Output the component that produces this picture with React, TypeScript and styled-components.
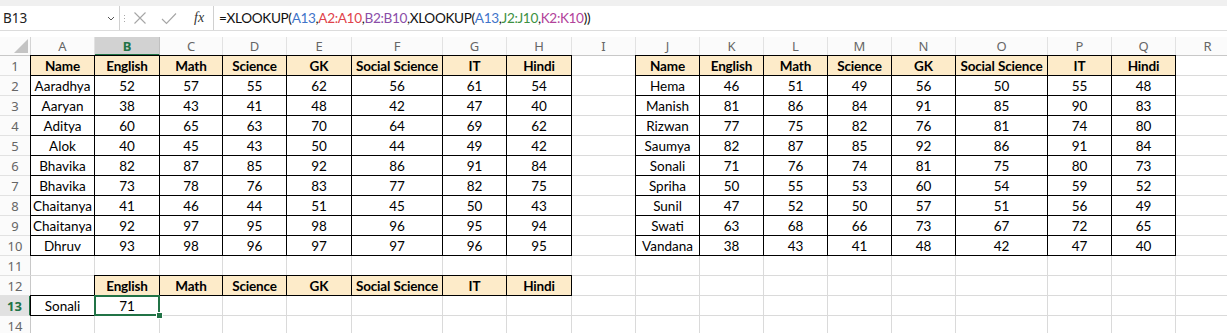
import React from "react";
import styled, { createGlobalStyle, css } from "styled-components";

const GlobalStyle = createGlobalStyle`
  html, body { margin: 0; padding: 0; background: #ffffff; overflow: hidden; }
  #root { width: 1227px; height: 333px; overflow: hidden; }
`;

const GREEN = "#217346";
const GRID = "#dadada";
const FILL = "#fdebc9";

const colWidths = [31, 64, 65, 63, 64, 65, 91, 64, 65, 64, 64, 64, 64, 64, 64, 92, 64, 64, 64];
const letters = "ABCDEFGHIJKLMNOPQR".split("");

const Page = styled.div`
  width: 1227px;
  height: 333px;
  overflow: hidden;
  background: #ffffff;
  font-family: Lato, "Liberation Sans", sans-serif;
`;

const TopStrip = styled.div`
  background: #f0f0f0;
  padding-top: 6px;
`;

const FormulaRow = styled.div`
  display: flex;
  height: 24px;
  background: #ffffff;
  border-bottom: 1px solid #dcdcdc;
`;

const NameBox = styled.div`
  width: 120px;
  box-sizing: border-box;
  display: flex;
  align-items: center;
  justify-content: space-between;
  padding: 0 4px 0 3px;
  font-family: "Noto Sans", "Open Sans", sans-serif;
  font-size: 13.5px;
  color: #222;
  border-right: 1px solid #d0d0d0;
`;

const Dots = styled.div`
  width: 8px;
  display: flex;
  flex-direction: column;
  align-items: center;
  justify-content: center;
  gap: 2px;
  span {
    width: 1px;
    height: 1px;
    background: #a8a8a8;
  }
`;

const FxArea = styled.div`
  width: 86px;
  box-sizing: border-box;
  display: flex;
  align-items: center;
  padding-left: 5px;
  gap: 14px;
  border-right: 1px solid #d0d0d0;
`;

const Fx = styled.span`
  font-family: "Liberation Serif", serif;
  font-style: italic;
  font-size: 14px;
  color: #333;
  margin-left: 3px;
`;

const FormulaText = styled.div`
  flex: 1;
  display: flex;
  align-items: center;
  padding-left: 5px;
  font-family: Lato, "Liberation Sans", sans-serif;
  font-size: 13.6px;
  letter-spacing: -0.35px;
  color: #111;
  white-space: pre;
`;

const Ref = styled.span<{ $c: string }>`
  color: ${(p) => p.$c};
`;

const Gap = styled.div`
  height: 6px;
  background: #ffffff;
`;

const Sheet = styled.div`
  display: grid;
  grid-template-columns: ${colWidths.map((w) => `${w}px`).join(" ")};
  grid-template-rows: 19px repeat(14, 20px);
`;

const Corner = styled.div`
  box-sizing: border-box;
  background: #fbfbfb;
  border-right: 1px solid #d4d4d4;
  border-bottom: 1px solid #c8c8c8;
  display: flex;
  align-items: flex-end;
  justify-content: flex-end;
  padding: 0 2px 2px 0;
`;

const ColHeader = styled.div<{ $sel?: boolean }>`
  box-sizing: border-box;
  display: flex;
  align-items: center;
  justify-content: center;
  font-family: "Noto Sans", "Open Sans", sans-serif;
  font-size: 13px;
  color: #666;
  background: #fbfbfb;
  border-right: 1px solid #e2e2e2;
  border-bottom: 1px solid #c8c8c8;
  ${(p) =>
    p.$sel &&
    css`
      background: #d2d2d2;
      color: ${GREEN};
      font-weight: 700;
      border-bottom: 2px solid ${GREEN};
      border-right-color: #c0c0c0;
    `}
`;

const RowHeader = styled.div<{ $sel?: boolean }>`
  box-sizing: border-box;
  display: flex;
  align-items: center;
  justify-content: center;
  font-family: "Noto Sans", "Open Sans", sans-serif;
  font-size: 13px;
  color: #666;
  background: #fbfbfb;
  border-right: 1px solid #c8c8c8;
  border-bottom: 1px solid #e2e2e2;
  ${(p) =>
    p.$sel &&
    css`
      background: #e1e1e1;
      color: ${GREEN};
      font-weight: 700;
      border-right: 2px solid ${GREEN};
    `}
`;

const Cell = styled.div<{ $head?: boolean; $bordered?: boolean; $active?: boolean }>`
  box-sizing: border-box;
  position: relative;
  display: flex;
  align-items: center;
  justify-content: center;
  padding-top: 1px;
  font-size: 13.5px;
  color: #000;
  white-space: nowrap;
  border-right: 1px solid ${GRID};
  border-bottom: 1px solid ${GRID};
  ${(p) =>
    p.$head &&
    css`
      background: ${FILL};
      font-weight: 700;
      letter-spacing: -0.15px;
    `}
  ${(p) =>
    p.$bordered &&
    css`
      border-right-color: #000;
      border-bottom-color: #000;
      box-shadow: -1px 0 0 #000, 0 -1px 0 #000, -1px -1px 0 #000;
    `}
  ${(p) =>
    p.$active &&
    css`
      &::after {
        content: "";
        position: absolute;
        left: -1px;
        top: -1px;
        right: -1px;
        bottom: -1px;
        border: 2px solid ${GREEN};
        z-index: 1;
      }
      &::before {
        content: "";
        position: absolute;
        right: -4px;
        bottom: -4px;
        width: 5px;
        height: 5px;
        background: ${GREEN};
        border: 1px solid #fff;
        z-index: 2;
      }
    `}
`;

type Spec = { text?: string; head?: boolean; bordered?: boolean; active?: boolean };

const subjects = ["English", "Math", "Science", "GK", "Social Science", "IT", "Hindi"];

const table1: [string, number[]][] = [
  ["Aaradhya", [52, 57, 55, 62, 56, 61, 54]],
  ["Aaryan", [38, 43, 41, 48, 42, 47, 40]],
  ["Aditya", [60, 65, 63, 70, 64, 69, 62]],
  ["Alok", [40, 45, 43, 50, 44, 49, 42]],
  ["Bhavika", [82, 87, 85, 92, 86, 91, 84]],
  ["Bhavika", [73, 78, 76, 83, 77, 82, 75]],
  ["Chaitanya", [41, 46, 44, 51, 45, 50, 43]],
  ["Chaitanya", [92, 97, 95, 98, 96, 95, 94]],
  ["Dhruv", [93, 98, 96, 97, 97, 96, 95]],
];

const table2: [string, number[]][] = [
  ["Hema", [46, 51, 49, 56, 50, 55, 48]],
  ["Manish", [81, 86, 84, 91, 85, 90, 83]],
  ["Rizwan", [77, 75, 82, 76, 81, 74, 80]],
  ["Saumya", [82, 87, 85, 92, 86, 91, 84]],
  ["Sonali", [71, 76, 74, 81, 75, 80, 73]],
  ["Spriha", [50, 55, 53, 60, 54, 59, 52]],
  ["Sunil", [47, 52, 50, 57, 51, 56, 49]],
  ["Swati", [63, 68, 66, 73, 67, 72, 65]],
  ["Vandana", [38, 43, 41, 48, 42, 47, 40]],
];

function buildRows(): Spec[][] {
  const rows: Spec[][] = [];
  for (let r = 1; r <= 14; r++) {
    const row: Spec[] = letters.map(() => ({}));
    if (r === 1) {
      ["Name", ...subjects].forEach((t, i) => {
        row[i] = { text: t, head: true, bordered: true };
        row[9 + i] = { text: t, head: true, bordered: true };
      });
    } else if (r >= 2 && r <= 10) {
      const [n1, v1] = table1[r - 2];
      const [n2, v2] = table2[r - 2];
      [n1, ...v1.map(String)].forEach((t, i) => (row[i] = { text: t, bordered: true }));
      [n2, ...v2.map(String)].forEach((t, i) => (row[9 + i] = { text: t, bordered: true }));
    } else if (r === 12) {
      subjects.forEach((t, i) => (row[1 + i] = { text: t, head: true, bordered: true }));
    } else if (r === 13) {
      row[0] = { text: "Sonali", bordered: true };
      row[1] = { text: "71", bordered: true, active: true };
    }
    rows.push(row);
  }
  return rows;
}

const CloseIcon = () => (
  <svg width="14" height="14" viewBox="0 0 14 14">
    <path d="M1.5 1.5 L12.5 12.5 M12.5 1.5 L1.5 12.5" stroke="#a6a6a6" strokeWidth="1.1" fill="none" />
  </svg>
);

const CheckIcon = () => (
  <svg width="16" height="13" viewBox="0 0 16 13">
    <path d="M1 7 L5.5 11.5 L15 1.5" stroke="#a6a6a6" strokeWidth="1.1" fill="none" />
  </svg>
);

const Chevron = () => (
  <svg width="8" height="5" viewBox="0 0 8 5">
    <path d="M1 1 L4 4 L7 1" stroke="#555" strokeWidth="1" fill="none" />
  </svg>
);

const CornerTriangle = () => (
  <svg width="14" height="14" viewBox="0 0 14 14">
    <path d="M14 0 L14 14 L0 14 Z" fill="#c4c4c4" />
  </svg>
);

export default function App() {
  const rows = buildRows();
  return (
    <Page>
      <GlobalStyle />
      <TopStrip>
        <FormulaRow>
          <NameBox>
            <span>B13</span>
            <Chevron />
          </NameBox>
          <Dots>
            <span />
            <span />
            <span />
          </Dots>
          <FxArea>
            <CloseIcon />
            <CheckIcon />
            <Fx>fx</Fx>
          </FxArea>
          <FormulaText>
            =XLOOKUP(<Ref $c="#3f74c9">A13</Ref>,<Ref $c="#e0434b">A2:A10</Ref>,
            <Ref $c="#8a4ea8">B2:B10</Ref>,XLOOKUP(<Ref $c="#3f74c9">A13</Ref>,
            <Ref $c="#3d9142">J2:J10</Ref>,<Ref $c="#b2439a">K2:K10</Ref>))
          </FormulaText>
        </FormulaRow>
      </TopStrip>
      <Gap />
      <Sheet>
        <Corner>
          <CornerTriangle />
        </Corner>
        {letters.map((l) => (
          <ColHeader key={l} $sel={l === "B"}>
            {l}
          </ColHeader>
        ))}
        {rows.map((row, ri) => (
          <React.Fragment key={ri}>
            <RowHeader $sel={ri + 1 === 13}>{ri + 1}</RowHeader>
            {row.map((c, ci) => (
              <Cell key={ci} $head={c.head} $bordered={c.bordered} $active={c.active}>
                {c.text}
              </Cell>
            ))}
          </React.Fragment>
        ))}
      </Sheet>
    </Page>
  );
}
